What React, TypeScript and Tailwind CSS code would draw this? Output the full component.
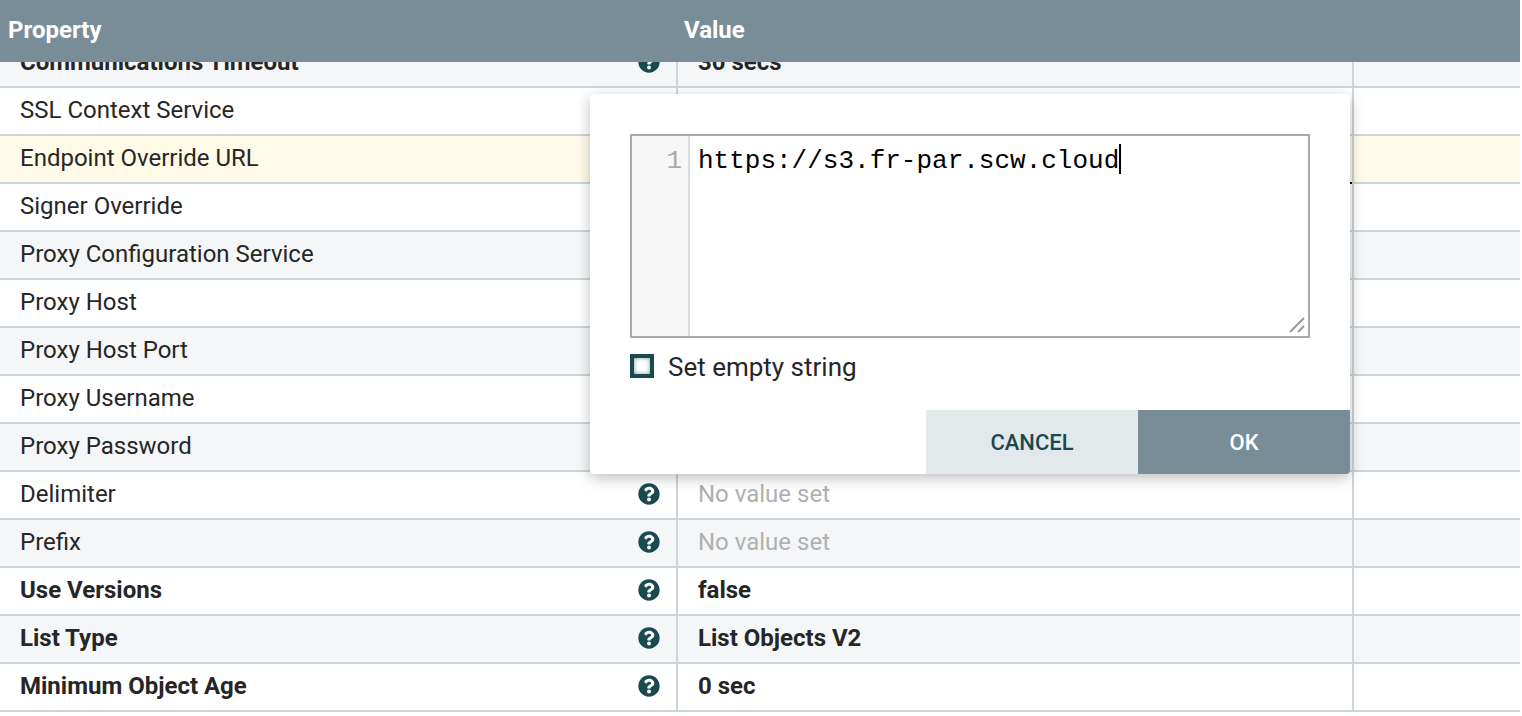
import React from 'react';
import { FaQuestionCircle } from 'react-icons/fa';

type Row = { name: string; value?: string; bold?: boolean; empty?: boolean };

const rows: Row[] = [
  { name: 'Communications Timeout', value: '30 secs', bold: true },
  { name: 'SSL Context Service' },
  { name: 'Endpoint Override URL' },
  { name: 'Signer Override' },
  { name: 'Proxy Configuration Service' },
  { name: 'Proxy Host' },
  { name: 'Proxy Host Port' },
  { name: 'Proxy Username' },
  { name: 'Proxy Password' },
  { name: 'Delimiter', empty: true },
  { name: 'Prefix', empty: true },
  { name: 'Use Versions', value: 'false', bold: true },
  { name: 'List Type', value: 'List Objects V2', bold: true },
  { name: 'Minimum Object Age', value: '0 sec', bold: true },
];

const App = () => {
  return (
    <div className="relative h-[716px] w-[1520px] overflow-hidden bg-white font-['Roboto',sans-serif] text-[24px] text-[#262626]">
      <div className="relative z-10 flex h-[62px] items-center bg-[#798d99] pb-[2px] font-bold text-white">
        <div className="w-[684px] pl-2">Property</div>
        <div>Value</div>
      </div>

      <div className="-mt-[22px]">
        {rows.map((row, i) => (
          <div
            key={row.name}
            className={`flex h-[48px] border-b-2 border-[#ccd5d9] ${
              row.name === 'Endpoint Override URL' ? 'bg-[#fffbe8]' : i % 2 === 0 ? 'bg-[#f4f6f8]' : 'bg-white'
            }`}
          >
            <div className="flex w-[678px] items-center justify-between border-r-2 border-[#ccd5d9] pb-[2px] pl-5 pr-[16px]">
              <span className={row.bold ? 'font-bold' : ''}>{row.name}</span>
              <FaQuestionCircle size={22} className="shrink-0 text-[#1a4a4f]" />
            </div>
            <div className="flex w-[676px] items-center border-r-2 border-[#ccd5d9] pb-[2px] pl-5">
              {row.value && <span className="font-bold">{row.value}</span>}
              {row.empty && <span className="text-[#aeb0b1]">No value set</span>}
            </div>
            <div className="flex-1" />
          </div>
        ))}
      </div>

      <span className="absolute left-[1350px] top-[182px] z-30 size-[2px] bg-black" />

      <div className="absolute left-[590px] top-[94px] z-20 flex h-[380px] w-[760px] flex-col rounded-[4px] bg-white shadow-[0_4px_14px_rgba(0,0,0,0.25)]">
        <div className="mx-10 mt-10 flex h-[204px] w-[680px] border-2 border-[#aaaaaa]">
          <div className="w-[58px] shrink-0 border-r-2 border-[#dddddd] bg-[#f7f7f7] pr-[6px] pt-[10px] text-right font-['Liberation_Mono',monospace] text-[26px] leading-[30px] text-[#aaaaaa]">
            1
          </div>
          <div className="relative flex-1 pl-2 pt-[10px] font-['Liberation_Mono',monospace] text-[26px] leading-[30px] text-black">
            <span>https://s3.fr-par.scw.cloud</span>
            <span className="absolute top-[8px] h-[30px] w-[2px] bg-black" />
            <svg width="16" height="16" viewBox="0 0 16 16" className="absolute bottom-[3px] right-[3px]">
              <path d="M1 15 15 1M9 15l6-6" stroke="#999999" strokeWidth="2" fill="none" />
            </svg>
          </div>
        </div>
        <div className="mx-10 mt-[8px] flex h-[40px] items-center gap-[14px] text-[26px]">
          <span className="size-6 border-4 border-[#1a4a4f] bg-white shadow-[inset_0_0_4px_rgba(26,74,79,0.6)]" />
          <span className="pt-[2px]">Set empty string</span>
        </div>
        <div className="mt-auto flex h-[64px] justify-end text-[22px] font-medium">
          <div className="flex w-[212px] items-center justify-center bg-[#e3e8eb] text-[#1a4a4f]">CANCEL</div>
          <div className="flex w-[212px] items-center justify-center rounded-br-[4px] bg-[#798d99] text-white">OK</div>
        </div>
      </div>
    </div>
  );
};

export default App;
